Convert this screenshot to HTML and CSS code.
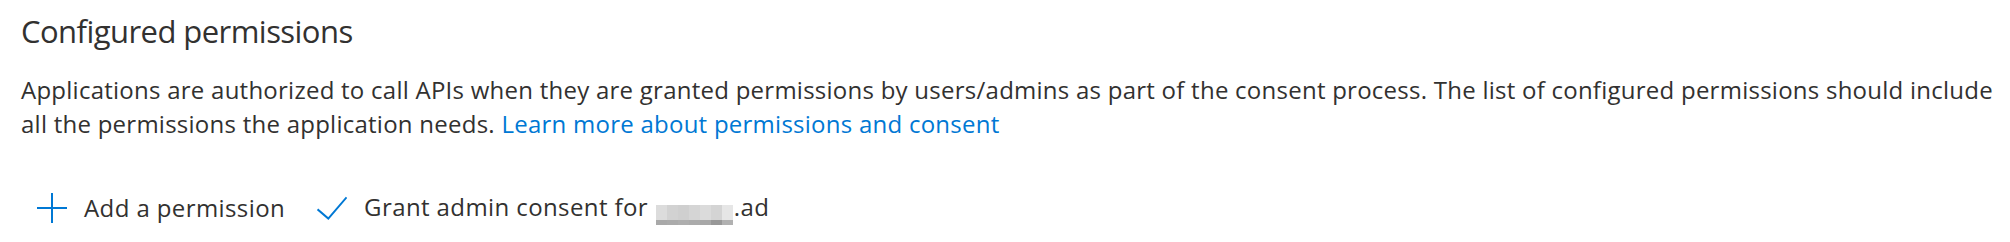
FILE: index.html
```html
<!DOCTYPE html>
<html lang="en">
<head>
    <meta charset="UTF-8">
    <meta name="viewport" content="width=device-width, initial-scale=1.0">
    <title>API permissions</title>
    <link rel="stylesheet" href="styles.css">
</head>
<body>

    <section class="permissions">
        <h2>Configured permissions</h2>
        <p class="intro">
            Applications are authorized to call APIs when they are granted permissions by users/admins as part of the consent process. The list of configured permissions should include all the permissions the application needs.
            <a href="#">Learn more about permissions and consent</a>
        </p>

        <div class="toolbar">
            <button class="tool-btn" type="button">
                <svg class="icon" viewBox="0 0 30 30" aria-hidden="true">
                    <path d="M15 0V30M0 15H30" />
                </svg>
                <span>Add a permission</span>
            </button>
            <button class="tool-btn" type="button">
                <svg class="icon" viewBox="0 0 30 30" aria-hidden="true">
                    <path d="M0.5 16.3L11.3 25.6L29.6 4.3" />
                </svg>
                <span>Grant admin consent for <span class="blur"></span>.ad</span>
            </button>
        </div>
    </section>

</body>
</html>
```
FILE: styles.css
```css
body {
    margin: 0;
    padding: 11px 0 0 21px;
    font-family: "Open Sans", "Noto Sans", sans-serif;
    color: #323130;
    background-color: #fff;
}
h2 {
    margin: 0;
    font-size: 31px;
    font-weight: 400;
    line-height: 40px;
    letter-spacing: -0.55px;
}
.intro {
    margin: 22px 0 0;
    font-size: 24px;
    line-height: 34px;
    letter-spacing: 0.25px;
}
.intro a {
    color: #0078d4;
    text-decoration: none;
}
.toolbar {
    display: flex;
    align-items: center;
    height: 34px;
    margin-top: 50px;
}
.tool-btn {
    display: flex;
    align-items: center;
    height: 34px;
    padding: 0 16px;
    border: none;
    background: none;
    font-family: inherit;
    font-size: 24px;
    line-height: 34px;
    letter-spacing: 0.4px;
    color: #323130;
    cursor: pointer;
}
.icon {
    width: 30px;
    height: 30px;
    margin-right: 17px;
    fill: none;
    stroke: #0078d4;
    stroke-width: 2;
}
/* pixelated tenant name */
.blur {
    display: inline-block;
    width: 77px;
    height: 31px;
    margin: 0 1px -10px;
    vertical-align: -10px;
    background:
        linear-gradient(90deg, #dcdcdc 0 11px, #d2d2d2 11px 22px, #cfcfcf 22px 33px, #d5d5d5 33px 44px, #dbdbdb 44px 55px, #d4d4d4 55px 66px, #e6e6e6 66px) top / 100% 15px no-repeat,
        linear-gradient(90deg, #a9a9a9 0 11px, #ababab 11px 22px, #aeaeae 22px 33px, #ababab 33px 44px, #a8a8a8 44px 55px, #989898 55px 66px, #b1b1b1 66px) 0 15px / 100% 9px no-repeat,
        linear-gradient(90deg, #f5f5f5 0 11px, #f2f2f2 11px 22px, #f3f3f3 22px 33px, #f5f5f5 33px 44px, #e9e9e9 44px 55px, #d6d6d6 55px 66px, #ececec 66px) 0 24px / 100% 7px no-repeat;
}
```
